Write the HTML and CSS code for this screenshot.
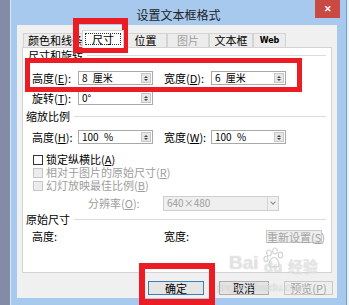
FILE: index.html
```html
<!DOCTYPE html>
<html lang="zh-CN">
  <head>
    <meta charset="UTF-8" />
    <title>设置文本框格式</title>
    <link rel="stylesheet" href="styles.css">
  </head>
  <body>
    <!-- Dialog window -->
    <div class="window">
      <div class="titlebar">
        <span></span>
        <span class="title">设置文本框格式</span>
        <button class="close-btn">&#x2715;</button>
      </div>

      <div class="client">
        <!-- Tabs -->
        <ul class="tabs">
          <li class="tab tab-color">颜色和线条</li>
          <li class="tab tab-size active"><span class="focus">尺寸</span></li>
          <li class="tab tab-pos">位置</li>
          <li class="tab tab-pic disabled">图片</li>
          <li class="tab tab-box">文本框</li>
          <li class="tab tab-web">Web</li>
        </ul>

        <!-- Panel -->
        <div class="panel">
          <div class="group">尺寸和旋转<span class="rule"></span></div>
          <div class="row row-1">
            <span class="label">高度(<u>E</u>):</span>
            <span class="spin"><span class="val">8 厘米</span><span class="arrows"><i class="up"></i><i class="down"></i></span></span>
            <span class="label label-2">宽度(<u>D</u>):</span>
            <span class="spin"><span class="val">6 厘米</span><span class="arrows"><i class="up"></i><i class="down"></i></span></span>
          </div>
          <div class="row row-2">
            <span class="label">旋转(<u>T</u>):</span>
            <span class="spin"><span class="val">0°</span><span class="arrows"><i class="up"></i><i class="down"></i></span></span>
          </div>

          <div class="group group-2">缩放比例<span class="rule"></span></div>
          <div class="row row-3">
            <span class="label">高度(<u>H</u>):</span>
            <span class="spin"><span class="val">100 %</span><span class="arrows"><i class="up"></i><i class="down"></i></span></span>
            <span class="label label-2">宽度(<u>W</u>):</span>
            <span class="spin"><span class="val">100 %</span><span class="arrows"><i class="up"></i><i class="down"></i></span></span>
          </div>
          <div class="check check-1"><span class="box"></span>锁定纵横比(<u>A</u>)</div>
          <div class="check disabled"><span class="box"></span>相对于图片的原始尺寸(<u>R</u>)</div>
          <div class="check disabled"><span class="box"></span>幻灯放映最佳比例(<u>B</u>)</div>
          <div class="row row-res">
            <span class="res-label">分辨率(<u>O</u>):</span>
            <span class="select"><span class="val">640×480</span><span class="drop"></span></span>
          </div>

          <div class="group group-3">原始尺寸<span class="rule"></span></div>
          <div class="row row-orig">
            <span class="label">高度:</span>
            <span class="gap-cell"></span>
            <span class="label label-2">宽度:</span>
            <button class="btn btn-reset" disabled>重新设置(<u>S</u>)</button>
          </div>
        </div>

        <!-- Buttons -->
        <div class="actions">
          <button class="btn btn-ok">确定</button>
          <button class="btn btn-cancel">取消</button>
          <button class="btn btn-preview" disabled>预览(<u>P</u>)</button>
        </div>
      </div>
    </div>
    <div class="edge"></div>

    <!-- Red markers -->
    <div class="mark mark-tab"></div>
    <div class="mark mark-size"></div>
    <div class="mark mark-ok"></div>

    <!-- Watermark -->
    <div class="watermark">
      <span class="wm-bai">Bai</span>
      <svg class="wm-paw" width="22" height="22" viewBox="0 0 22 22">
        <g fill="none" stroke="rgba(200,200,200,0.8)" stroke-width="1.2">
          <ellipse cx="6" cy="6" rx="2.3" ry="3" />
          <ellipse cx="12" cy="4" rx="2.3" ry="3" />
          <ellipse cx="17.5" cy="8" rx="2.2" ry="2.8" />
          <ellipse cx="3" cy="12" rx="2" ry="2.6" />
          <path d="M6 18 C6 13 9 10.5 11 10.5 C13 10.5 16 13 16 18 C16 20.5 13 20 11 19.5 C9 20 6 20.5 6 18 Z" />
        </g>
      </svg>
      <span class="wm-du">du</span>
      <span class="wm-jy">经验</span>
      <span class="wm-url">jingyan.baidu.com</span>
    </div>
  </body>
</html>
```

FILE: styles.css
```css
/* Page */
body {
  margin: 0;
  width: 349px;
  height: 305px;
  overflow: hidden;
  background: #838ca6;
  display: flex;
  font-family: "Noto Sans CJK SC", "Liberation Sans", sans-serif;
  font-size: 11px;
  line-height: 14px;
  color: #000;
  position: relative;
}
u {
  text-decoration: underline;
}

/* Window frame */
.window {
  margin-left: 10px;
  width: 320px;
  height: 298px;
  background: #a7c9ee;
  border-left: 1px solid #d6e6f7;
  padding: 0 9px 7px 6px;
  display: flex;
  flex-direction: column;
}
.edge {
  width: 2px;
  background: #eef3f9;
  border-left: 1px solid #6f9fd6;
}
.titlebar {
  height: 25px;
  display: grid;
  grid-template-columns: 1fr auto 1fr;
  align-items: start;
  margin-right: -3px;
}
.title {
  padding-top: 6px;
  line-height: 17px;
  font-size: 12px;
  color: #222;
}
.close-btn {
  justify-self: end;
  width: 25px;
  height: 18px;
  border: none;
  padding: 0;
  background: #c84a43;
  color: white;
  font-size: 9px;
  font-weight: bold;
  line-height: 18px;
}

/* Client area */
.client {
  flex: 1;
  background: #f0f0f0;
  padding: 6px 5px 0 5px;
  display: flex;
  flex-direction: column;
}

/* Tabs */
.tabs {
  display: flex;
  align-items: flex-end;
  list-style: none;
  margin: 0;
  padding: 0 0 0 1px;
  height: 16px;
}
.tab {
  height: 13px;
  line-height: 13px;
  border: 1px solid #d4d4d4;
  border-bottom: none;
  background: #ececec;
  text-align: center;
  white-space: nowrap;
  overflow: hidden;
}
.tab-color {
  width: 56px;
  text-align: left;
  padding-left: 4px;
}
.tab-size {
  width: 40px;
  margin-left: -3px;
}
.tab-pos {
  width: 41px;
}
.tab-pic {
  width: 40px;
}
.tab-box {
  width: 42px;
}
.tab-web {
  width: 31px;
  font-family: "DejaVu Sans", sans-serif;
  font-size: 8px;
  font-weight: bold;
}
.tab.disabled {
  color: #a0a0a0;
}
.tab.active {
  position: relative;
  z-index: 1;
  height: 16px;
  line-height: 16px;
  margin-bottom: -1px;
  background: white;
  padding-bottom: 1px;
}
.focus {
  display: inline-block;
  line-height: 10px;
  padding: 0 6px;
  border: 1px dotted #333;
}

/* Panel */
.panel {
  height: 224px;
  background: white;
  border: 1px solid #d4d4d4;
  display: flex;
  flex-direction: column;
}
.group {
  height: 14px;
  line-height: 14px;
  display: flex;
  align-items: center;
  padding-left: 5px;
  margin-right: 5px;
  white-space: nowrap;
}
.group-2,
.group-3 {
  padding-left: 3px;
}
.group-2 {
  margin-top: 3px;
}
.group-3 {
  margin-top: 1px;
}
.rule {
  flex: 1;
  height: 1px;
  background: #dcdcdc;
  margin-left: 4px;
}
.row {
  height: 16px;
  display: flex;
  align-items: center;
  padding-left: 9px;
  white-space: nowrap;
}
.row-1 {
  margin-top: 8px;
}
.row-2 {
  margin-top: 4px;
}
.row-3 {
  margin-top: 6px;
}
.row-orig {
  margin-top: 2px;
}
.label {
  width: 46px;
}
.label-2 {
  width: 47px;
  margin-left: 11px;
}
.spin,
.select {
  height: 12px;
  border: 1px solid #a9a9a9;
  display: flex;
  align-items: center;
  background: white;
}
.spin {
  width: 73px;
}
.val {
  flex: 1;
  padding-left: 3px;
  font-size: 10px;
  line-height: 12px;
  word-spacing: 3px;
}
.arrows {
  width: 10px;
  height: 10px;
  margin-right: 1px;
  background: #e6e6e6;
  border: 1px solid #c8c8c8;
  box-sizing: border-box;
  display: flex;
  flex-direction: column;
  align-items: center;
  justify-content: center;
  gap: 1px;
}
.up {
  border-left: 2px solid transparent;
  border-right: 2px solid transparent;
  border-bottom: 2px solid #444;
}
.down {
  border-left: 2px solid transparent;
  border-right: 2px solid transparent;
  border-top: 2px solid #444;
}

/* Checkboxes */
.check {
  height: 13px;
  line-height: 13px;
  display: flex;
  align-items: center;
  padding-left: 10px;
  white-space: nowrap;
}
.check-1 {
  margin-top: 8px;
}
.box {
  width: 8px;
  height: 8px;
  border: 1px solid #333;
  background: white;
  margin-right: 3px;
}
.check.disabled {
  color: #9d9d9d;
}
.check.disabled .box {
  border-color: #c6c6c6;
  background: #ececec;
}

/* Resolution */
.row-res {
  margin-top: 3px;
  padding-left: 65px;
  color: #9d9d9d;
}
.res-label {
  width: 75px;
}
.select {
  width: 114px;
  height: 13px;
  background: #efefef;
  border-color: #cfcfcf;
}
.drop {
  width: 10px;
  height: 13px;
  border-left: 1px solid #d6d6d6;
  display: flex;
  align-items: center;
  justify-content: center;
}
.drop::before {
  content: "";
  width: 3px;
  height: 3px;
  border-right: 1px solid #8a8a8a;
  border-bottom: 1px solid #8a8a8a;
  transform: rotate(45deg);
  margin-top: -2px;
}

/* Original size row */
.gap-cell {
  width: 75px;
}
.row-orig .label-2 {
  width: 102px;
}

/* Buttons */
.btn {
  height: 14px;
  padding: 0;
  border: 1px solid #acacac;
  background: #e5e5e5;
  font-family: inherit;
  font-size: 11px;
  line-height: 12px;
  color: #000;
}
.btn:disabled {
  color: #a3a3a3;
  border-color: #c9c9c9;
  background: #eeeeee;
}
.btn-reset {
  width: 56px;
  height: 13px;
}
.actions {
  display: flex;
  justify-content: flex-end;
  gap: 15px;
  margin-top: 8px;
  margin-right: -1px;
}
.btn-ok {
  width: 56px;
  border-color: #3c7fb1;
}
.btn-cancel {
  width: 50px;
}
.btn-preview {
  width: 49px;
}

/* Red markers drawn over the screenshot */
.mark {
  position: absolute;
  border: 6px solid #ec1c24;
  box-sizing: border-box;
}
.mark-tab {
  left: 73px;
  top: 18px;
  width: 55px;
  height: 35px;
}
.mark-size {
  left: 25px;
  top: 58px;
  width: 277px;
  height: 34px;
  border-width: 5px;
}
.mark-ok {
  left: 139px;
  top: 263px;
  width: 76px;
  height: 42px;
}

/* Watermark */
.watermark {
  position: absolute;
  left: 229px;
  top: 247px;
  width: 100px;
  height: 50px;
  color: rgba(255, 255, 255, 0.55);
  font-family: "Liberation Sans", sans-serif;
  font-weight: bold;
  text-shadow: 0 0 1px rgba(150, 150, 150, 0.6);
}
.wm-bai {
  position: absolute;
  left: 0;
  top: 9px;
  font-size: 19px;
}
.wm-paw {
  position: absolute;
  left: 34px;
  top: 0;
}
.wm-du {
  position: absolute;
  left: 35px;
  top: 13px;
  font-size: 15px;
}
.wm-jy {
  position: absolute;
  left: 59px;
  top: 12px;
  font-size: 15px;
  font-family: "Noto Sans CJK SC", sans-serif;
}
.wm-url {
  position: absolute;
  left: -12px;
  top: 33px;
  font-size: 11px;
  font-weight: normal;
}
```
